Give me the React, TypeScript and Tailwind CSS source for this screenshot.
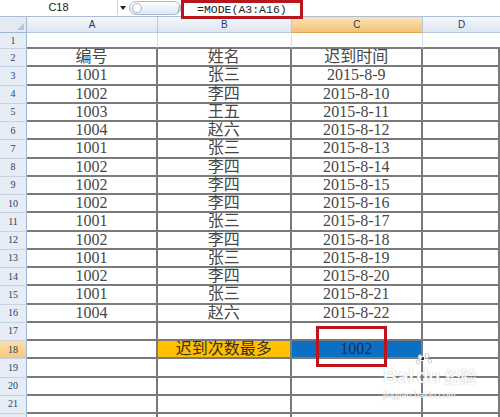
import React from "react";

const COLS = [131, 133.5, 131.5];
const ROW_H = 18.25;

const data: [string, string, string][] = [
  ["编号", "姓名", "迟到时间"],
  ["1001", "张三", "2015-8-9"],
  ["1002", "李四", "2015-8-10"],
  ["1003", "王五", "2015-8-11"],
  ["1004", "赵六", "2015-8-12"],
  ["1001", "张三", "2015-8-13"],
  ["1002", "李四", "2015-8-14"],
  ["1002", "李四", "2015-8-15"],
  ["1002", "李四", "2015-8-16"],
  ["1001", "张三", "2015-8-17"],
  ["1002", "李四", "2015-8-18"],
  ["1001", "张三", "2015-8-19"],
  ["1002", "李四", "2015-8-20"],
  ["1001", "张三", "2015-8-21"],
  ["1004", "赵六", "2015-8-22"],
  ["", "", ""],
];

function RowHeader({ n, active }: { n?: number; active?: boolean }) {
  return (
    <div
      className={`w-[27px] shrink-0 h-full flex items-center justify-center border-r border-r-[#9eb6ce] border-b border-b-[#c5d3e3] text-[10px] text-[#2b3f5c] ${
        active ? "bg-gradient-to-b from-[#fbe0ab] to-[#f5c77f]" : "bg-[#e6edf7]"
      }`}
      style={{ fontFamily: '"Liberation Serif", serif' }}
    >
      {n}
    </div>
  );
}

function Cell({
  w,
  children,
  className = "",
}: {
  w?: number;
  children?: React.ReactNode;
  className?: string;
}) {
  return (
    <div
      className={`h-full flex items-center justify-center border-r-2 border-b-2 border-[#7a7a7a] ${
        w ? "shrink-0" : "flex-1"
      } ${className}`}
      style={w ? { width: w } : undefined}
    >
      {children}
    </div>
  );
}

export default function App() {
  const font = '"Liberation Serif", "Noto Sans CJK SC", serif';
  return (
    <div className="w-[500px] h-[417px] overflow-hidden bg-white relative">
      {/* formula bar */}
      <div className="h-[17px] flex items-start bg-white border-b border-[#a9bdd6]">
        <div
          className="w-[118px] h-[15px] flex items-center justify-center text-[11px] text-[#222] border-r border-[#c9d6e6]"
          style={{ fontFamily: '"Liberation Sans", sans-serif' }}
        >
          C18
        </div>
        <div className="w-[10px] h-[15px] flex items-center justify-center">
          <div className="w-0 h-0 border-l-[3px] border-r-[3px] border-t-[4px] border-l-transparent border-r-transparent border-t-[#222]" />
        </div>
        <div className="w-[52px] h-[14px] mt-[1px] ml-[1px] rounded-full border border-[#a7b9d1] bg-gradient-to-b from-[#ffffff] to-[#dde6f2] flex items-center pl-[2px] relative">
          <div className="w-[10px] h-[10px] rounded-full border border-[#9fb2cc] bg-white" />
          <span
            className="absolute right-[-4px] top-[0px] text-[9px] italic text-[#999]"
            style={{ fontFamily: '"Liberation Serif", serif' }}
          >
            fx
          </span>
        </div>
        <div className="w-[122px] h-[19px] border-[3px] border-[#b8151d] bg-white flex items-center pl-[13px] relative z-10">
          <span
            className="text-[11.5px] text-[#222] leading-none"
            style={{ fontFamily: '"Liberation Mono", monospace' }}
          >
            =MODE(A3:A16)
          </span>
        </div>
        <div className="flex-1" />
      </div>

      {/* column header */}
      <div className="h-[16px] flex">
        <div className="w-[27px] shrink-0 h-full bg-[#e3eaf4] border-r border-b border-[#9eb6ce] relative">
          <div className="absolute right-[2px] bottom-[2px] w-0 h-0 border-l-[7px] border-l-transparent border-b-[7px] border-b-[#b7c4d4]" />
        </div>
        {["A", "B", "C"].map((c, i) => (
          <div
            key={c}
            className={`shrink-0 h-full flex items-center justify-center text-[10px] text-[#2b3a52] border-r border-b border-[#b9c8da] ${
              c === "C"
                ? "bg-gradient-to-b from-[#fbe3b6] to-[#f4c274] border-b-[#e2a54f]"
                : "bg-gradient-to-b from-[#f5f8fc] to-[#dde5f0]"
            }`}
            style={{ width: COLS[i], fontFamily: '"Liberation Sans", sans-serif' }}
          >
            {c}
          </div>
        ))}
        <div
          className="flex-1 h-full flex items-center justify-center text-[10px] text-[#2b3a52] bg-gradient-to-b from-[#f5f8fc] to-[#dde5f0] border-b border-[#b9c8da]"
          style={{ fontFamily: '"Liberation Sans", sans-serif' }}
        >
          D
        </div>
      </div>

      {/* row 1 */}
      <div className="h-[16px] flex">
        <RowHeader n={1} />
        {COLS.map((w, i) => (
          <div
            key={i}
            className="shrink-0 h-full border-r border-r-[#d5dde9] border-b-2 border-b-[#7a7a7a]"
            style={{ width: w }}
          />
        ))}
        <div className="flex-1 h-full border-b-2 border-b-[#7a7a7a]" />
      </div>

      {/* data rows */}
      <div style={{ fontFamily: font }} className="text-[16px] text-[#474747] leading-none">
        {data.map((r, idx) => (
          <div key={idx} className="flex" style={{ height: ROW_H }}>
            <RowHeader n={idx + 2} />
            <Cell w={COLS[0]}>{r[0]}</Cell>
            <Cell w={COLS[1]}>{r[1]}</Cell>
            <Cell w={COLS[2]}>{r[2]}</Cell>
            <Cell />
          </div>
        ))}
        {/* row 18 */}
        <div className="flex" style={{ height: ROW_H }}>
          <RowHeader n={18} active />
          <Cell w={COLS[0]} />
          <Cell w={COLS[1]} className="bg-[#ffc000] text-[#3a3020]">
            迟到次数最多
          </Cell>
          <Cell w={COLS[2]} className="bg-[#0b6fc3] text-[#14305c] relative">
            1002
            <div className="absolute right-[-4px] bottom-[-4px] w-[5px] h-[5px] bg-[#333] border border-white" />
          </Cell>
          <Cell />
        </div>
        {[19, 20, 21].map((n) => (
          <div key={n} className="flex" style={{ height: ROW_H }}>
            <RowHeader n={n} />
            <Cell w={COLS[0]} />
            <Cell w={COLS[1]} />
            <Cell w={COLS[2]} />
            <Cell />
          </div>
        ))}
        <div className="flex" style={{ height: ROW_H }}>
          <RowHeader />
          <Cell w={COLS[0]} />
          <Cell w={COLS[1]} />
          <Cell w={COLS[2]} />
          <Cell />
        </div>
      </div>

      {/* annotation box around C18 */}
      <div className="absolute left-[316px] top-[326px] w-[71px] h-[41px] border-[3px] border-[#c0121b]" />

      {/* watermark */}
      <div className="absolute left-[383px] top-[366px] flex flex-col items-start text-white opacity-90 pointer-events-none">
        <div
          className="flex items-end gap-[2px] text-[20px] font-bold leading-none [text-shadow:0_0_1px_#9a9a9a]"
          style={{ fontFamily: '"Liberation Sans", "Noto Sans CJK SC", sans-serif' }}
        >
          <span>Bai</span>
          <span className="relative">
            <svg width="16" height="18" viewBox="0 0 16 18" className="absolute left-[0px] top-[-14px]">
              <g fill="white" stroke="#a8a8a8" strokeWidth="0.6">
                <ellipse cx="4" cy="5" rx="2" ry="2.6" />
                <ellipse cx="11" cy="4" rx="2" ry="2.6" />
                <ellipse cx="1.8" cy="10" rx="1.6" ry="2" />
                <ellipse cx="14" cy="9" rx="1.6" ry="2" />
              </g>
            </svg>
            du
          </span>
          <span className="text-[16px] font-bold ml-[2px]">经验</span>
        </div>
        <div
          className="text-[9px] mt-[3px] [text-shadow:0_0_1px_#a0a0a0]"
          style={{ fontFamily: '"Liberation Sans", sans-serif' }}
        >
          jingyan.baidu.com
        </div>
      </div>
    </div>
  );
}
